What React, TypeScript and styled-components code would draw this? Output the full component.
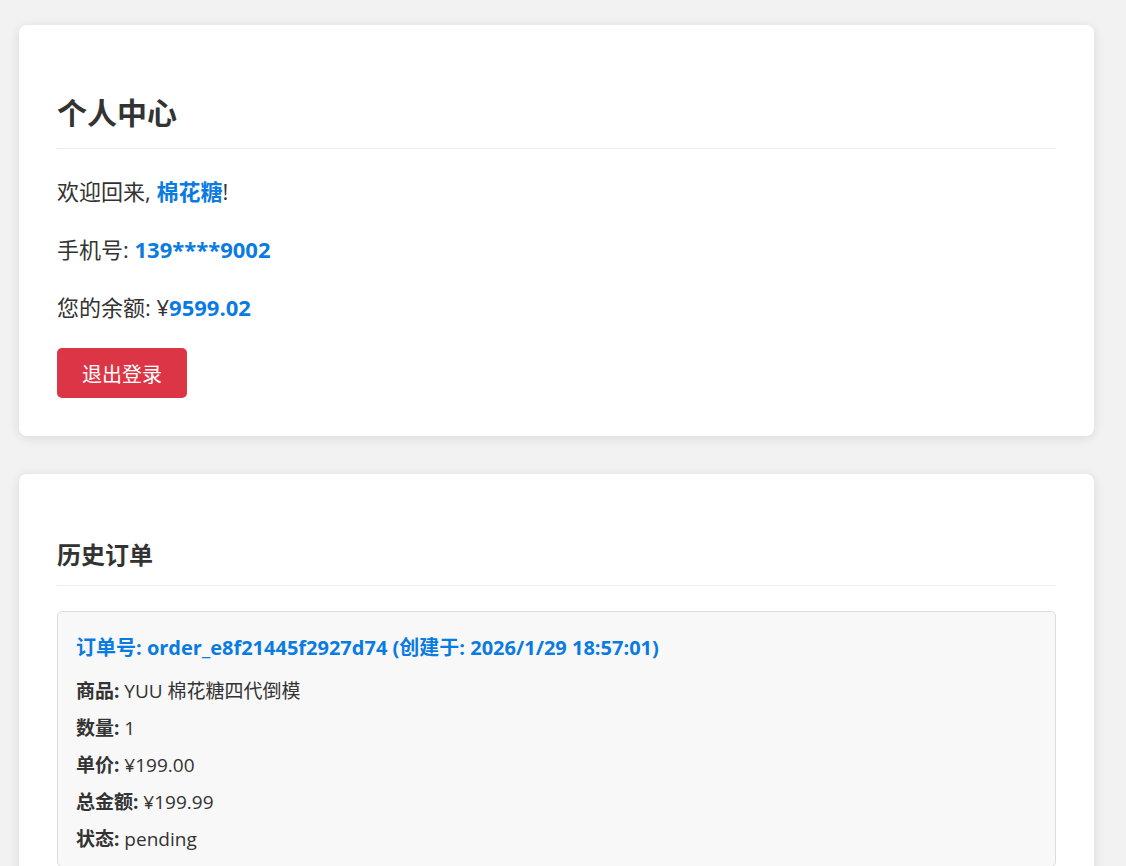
import styled, { createGlobalStyle } from 'styled-components'

const GlobalStyle = createGlobalStyle`
   body {
      margin: 0;
      background: #f2f2f2;
      font-family: "Open Sans", "Noto Sans CJK SC", sans-serif;
      color: #333;
   }
`

const Page = styled.div`
   display: flex;
   flex-direction: column;
   gap: 38px;
   padding: 25px 32px 40px 19px;
`

const Card = styled.section`
   background: #fff;
   border-radius: 8px;
   box-shadow: 0 2px 12px rgba(0, 0, 0, 0.1);
   padding: 38px;
`

const Title = styled.h2<{ $size: number }>`
   margin: 0;
   padding: ${(p) => (p.$size > 26 ? '30px 0 16px' : '27px 0 15px')};
   font-size: ${(p) => p.$size}px;
   font-weight: 700;
   line-height: 1.3;
   color: #333;
   border-bottom: 1px solid #eee;
`

const Info = styled.p`
   margin: 26px 0 0;
   font-size: 22px;
   line-height: 32px;
`

const Highlight = styled.strong`
   color: #0a7be0;
   font-weight: 700;
`

const LogoutButton = styled.button`
   margin-top: 25px;
   width: 130px;
   height: 50px;
   border: none;
   border-radius: 5px;
   background: #dc3545;
   color: #fff;
   font-family: inherit;
   font-size: 20px;
   cursor: pointer;
`

const OrderList = styled.div`
   display: flex;
   flex-direction: column;
   gap: 20px;
   margin-top: 25px;
`

const OrderItem = styled.div`
   background: #f8f8f8;
   border: 1px solid #ddd;
   border-radius: 5px;
   padding: 23px 18px 8px;
`

const OrderHead = styled.h3`
   margin: 0 0 12px;
   font-size: 20px;
   line-height: 26px;
   font-weight: 700;
   color: #0a7be0;
`

const Field = styled.p`
   margin: 0;
   font-size: 19px;
   line-height: 37px;
`

const Label = styled.strong`
   font-weight: 700;
`

interface Order {
   id: string
   createdAt: string
   product: string
   quantity: number
   price: string
   total: string
   status: string
}

const orders: Order[] = [
   {
      id: 'order_e8f21445f2927d74',
      createdAt: '2026/1/29 18:57:01',
      product: 'YUU 棉花糖四代倒模',
      quantity: 1,
      price: '¥199.00',
      total: '¥199.99',
      status: 'pending',
   },
]

export default function App() {
   return (
      <>
         <GlobalStyle />
         <Page>
            <Card>
               <Title $size={30}>个人中心</Title>
               <Info>
                  欢迎回来, <Highlight>棉花糖</Highlight>!
               </Info>
               <Info>
                  手机号: <Highlight>139****9002</Highlight>
               </Info>
               <Info>
                  您的余额: ¥<Highlight>9599.02</Highlight>
               </Info>
               <LogoutButton type="button">退出登录</LogoutButton>
            </Card>

            <Card>
               <Title $size={24}>历史订单</Title>
               <OrderList>
                  {orders.map((order) => (
                     <OrderItem key={order.id}>
                        <OrderHead>
                           订单号: {order.id} (创建于: {order.createdAt})
                        </OrderHead>
                        <Field>
                           <Label>商品:</Label> {order.product}
                        </Field>
                        <Field>
                           <Label>数量:</Label> {order.quantity}
                        </Field>
                        <Field>
                           <Label>单价:</Label> {order.price}
                        </Field>
                        <Field>
                           <Label>总金额:</Label> {order.total}
                        </Field>
                        <Field>
                           <Label>状态:</Label> {order.status}
                        </Field>
                     </OrderItem>
                  ))}
               </OrderList>
            </Card>
         </Page>
      </>
   )
}
